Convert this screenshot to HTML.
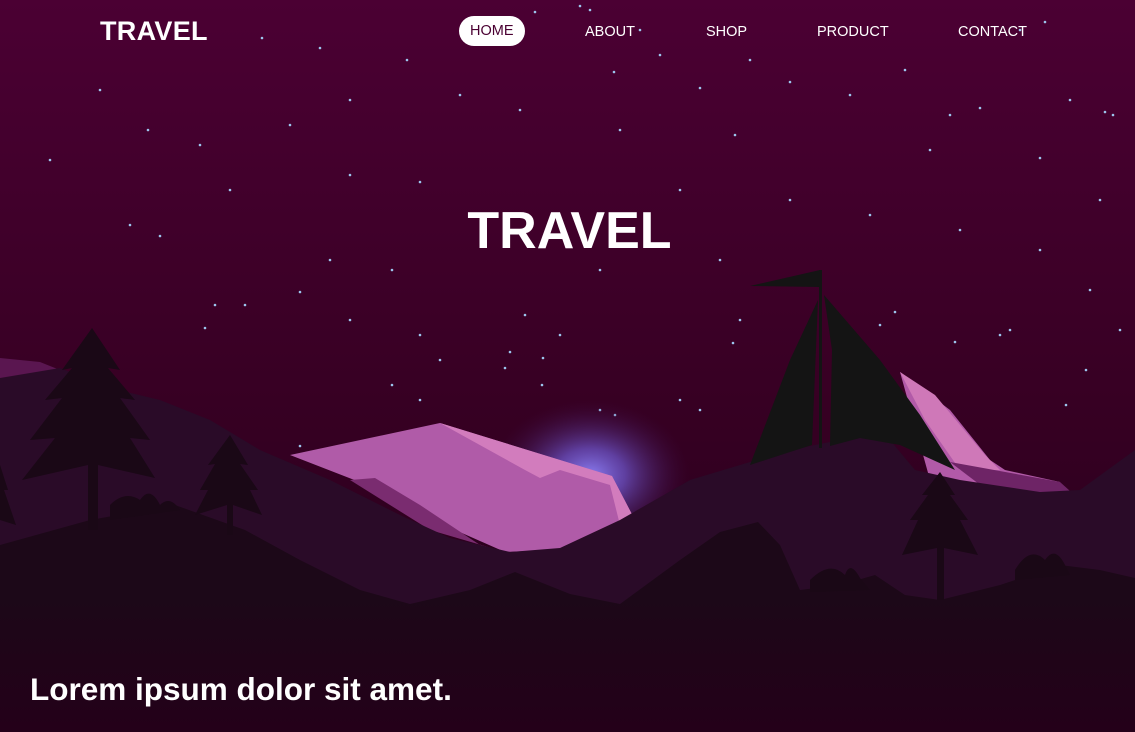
<!DOCTYPE html>
<html><head><meta charset="utf-8"><style>
html,body{margin:0;padding:0;width:1135px;height:732px;overflow:hidden;background:#3a0025;font-family:"Liberation Sans",sans-serif}
svg{position:absolute;left:0;top:0}
.logo{position:absolute;left:100px;top:16px;color:#fff;font-weight:bold;font-size:27px;letter-spacing:0.3px}
.nav a{position:absolute;top:23px;color:#fff;font-size:14.5px;text-decoration:none;line-height:18px}
.home{background:#fff;color:#4a0032!important;border-radius:16px;padding:6px 11px;top:16px!important}
.title{position:absolute;left:0;width:1135px;text-align:center;top:201px;color:#fff;font-weight:bold;font-size:52px;padding-left:2px}
.lorem{position:absolute;left:30px;top:671px;color:#fff;font-weight:bold;font-size:31.5px}
</style></head><body>
<svg width="1135" height="732" viewBox="0 0 1135 732">
<defs>
<linearGradient id="sky" x1="0" y1="0" x2="0" y2="1">
<stop offset="0" stop-color="#4b0033"/><stop offset="0.55" stop-color="#370023"/><stop offset="1" stop-color="#23001a"/>
</linearGradient>
<radialGradient id="glow" cx="0.5" cy="0.5" r="0.5">
<stop offset="0" stop-color="#8a7cf0"/><stop offset="0.35" stop-color="#6a4fc0" stop-opacity="0.8"/><stop offset="1" stop-color="#3a0a40" stop-opacity="0"/>
</radialGradient>
<linearGradient id="ground" x1="0" y1="0" x2="0" y2="1">
<stop offset="0" stop-color="#1c0818"/><stop offset="0.4" stop-color="#1c0818"/><stop offset="1" stop-color="#240019"/>
</linearGradient>
</defs>
<rect width="1135" height="732" fill="url(#sky)"/>
<g fill="#9cc6ee">
<circle cx="262" cy="38" r="1.3"/><circle cx="148" cy="130" r="1.3"/><circle cx="200" cy="145" r="1.3"/><circle cx="320" cy="48" r="1.3"/><circle cx="407" cy="60" r="1.3"/>
<circle cx="535" cy="12" r="1.3"/><circle cx="580" cy="6" r="1.3"/><circle cx="590" cy="10" r="1.3"/><circle cx="614" cy="72" r="1.3"/><circle cx="640" cy="30" r="1.3"/>
<circle cx="660" cy="55" r="1.3"/><circle cx="700" cy="88" r="1.3"/><circle cx="750" cy="60" r="1.3"/><circle cx="790" cy="82" r="1.3"/><circle cx="850" cy="95" r="1.3"/>
<circle cx="905" cy="70" r="1.3"/><circle cx="950" cy="115" r="1.3"/><circle cx="980" cy="108" r="1.3"/><circle cx="1020" cy="30" r="1.3"/><circle cx="1045" cy="22" r="1.3"/>
<circle cx="1070" cy="100" r="1.3"/><circle cx="1105" cy="112" r="1.3"/><circle cx="1113" cy="115" r="1.3"/><circle cx="1040" cy="158" r="1.3"/><circle cx="930" cy="150" r="1.3"/>
<circle cx="735" cy="135" r="1.3"/><circle cx="620" cy="130" r="1.3"/><circle cx="520" cy="110" r="1.3"/><circle cx="460" cy="95" r="1.3"/><circle cx="350" cy="100" r="1.3"/>
<circle cx="290" cy="125" r="1.3"/><circle cx="230" cy="190" r="1.3"/><circle cx="160" cy="236" r="1.3"/><circle cx="130" cy="225" r="1.3"/><circle cx="350" cy="175" r="1.3"/>
<circle cx="420" cy="182" r="1.3"/><circle cx="392" cy="270" r="1.3"/><circle cx="330" cy="260" r="1.3"/><circle cx="300" cy="292" r="1.3"/><circle cx="215" cy="305" r="1.3"/>
<circle cx="205" cy="328" r="1.3"/><circle cx="245" cy="305" r="1.3"/><circle cx="350" cy="320" r="1.3"/><circle cx="420" cy="335" r="1.3"/><circle cx="440" cy="360" r="1.3"/>
<circle cx="505" cy="368" r="1.3"/><circle cx="510" cy="352" r="1.3"/><circle cx="543" cy="358" r="1.3"/><circle cx="560" cy="335" r="1.3"/><circle cx="525" cy="315" r="1.3"/>
<circle cx="542" cy="385" r="1.3"/><circle cx="392" cy="385" r="1.3"/><circle cx="420" cy="400" r="1.3"/><circle cx="300" cy="446" r="1.3"/><circle cx="600" cy="410" r="1.3"/>
<circle cx="615" cy="415" r="1.3"/><circle cx="680" cy="400" r="1.3"/><circle cx="700" cy="410" r="1.3"/><circle cx="733" cy="343" r="1.3"/><circle cx="740" cy="320" r="1.3"/>
<circle cx="880" cy="325" r="1.3"/><circle cx="895" cy="312" r="1.3"/><circle cx="955" cy="342" r="1.3"/><circle cx="1000" cy="335" r="1.3"/><circle cx="1010" cy="330" r="1.3"/>
<circle cx="1066" cy="405" r="1.3"/><circle cx="1086" cy="370" r="1.3"/><circle cx="1120" cy="330" r="1.3"/><circle cx="1040" cy="250" r="1.3"/><circle cx="960" cy="230" r="1.3"/>
<circle cx="870" cy="215" r="1.3"/><circle cx="790" cy="200" r="1.3"/><circle cx="720" cy="260" r="1.3"/><circle cx="600" cy="270" r="1.3"/><circle cx="1100" cy="200" r="1.3"/>
<circle cx="470" cy="25" r="1.3"/><circle cx="100" cy="90" r="1.3"/><circle cx="50" cy="160" r="1.3"/><circle cx="680" cy="190" r="1.3"/><circle cx="1090" cy="290" r="1.3"/>
</g>
<ellipse cx="590" cy="475" rx="100" ry="75" fill="url(#glow)"/>
<path d="M0 358 L40 362 L80 378 L0 380 Z" fill="#5a1650"/>
<path d="M900 372 L950 410 L990 460 L1005 470 L1060 482 L1000 500 L930 480 Z" fill="#b25aa8"/>
<path d="M900 372 L935 395 L985 455 L1000 470 L960 470 L925 420 Z" fill="#cf78b8"/>
<path d="M950 462 L1060 482 L1080 500 L1000 500 Z" fill="#6e2466"/>
<path d="M290 455 L440 423 L612 476 L636 522 L560 550 L505 552 L455 530 L375 488 Z" fill="#b05ba8"/>
<path d="M440 423 L612 476 L636 522 L620 525 L610 485 L560 470 L540 478 L525 470 Z" fill="#d27cbd"/>
<path d="M350 480 L375 478 L420 505 L480 545 L505 552 L430 530 Z" fill="#7a2c70"/>
<path d="M0 378 L60 368 L110 388 L160 400 L210 420 L260 450 L330 480 L400 515 L450 538 L510 552 L560 548 L620 520 L690 480 L750 462 L800 448 L860 436 L890 440 L915 470 L960 480 L1040 492 L1080 490 L1135 450 L1135 732 L0 732 Z" fill="#2a0b28"/>
<g fill="#141414">
<path d="M750 286 L820 270 L820 287 Z"/>
<rect x="819" y="270" width="3" height="178"/>
<path d="M818 300 L790 360 L750 465 L790 452 L812 445 Z"/>
<path d="M824 295 L880 360 L920 415 L955 470 L900 445 L860 438 L830 446 L832 350 Z"/>
</g>
<path d="M0 545 L90 520 L175 505 L245 530 L300 560 L360 590 L410 604 L470 590 L515 572 L570 594 L620 604 L680 560 L720 532 L758 522 L780 545 L800 590 L840 585 L875 575 L905 595 L940 600 L1000 585 L1060 565 L1100 570 L1135 578 L1135 732 L0 732 Z" fill="url(#ground)"/>
<g fill="#1a0816">
<path d="M92 328 L120 370 L108 368 L135 400 L120 398 L150 440 L130 438 L155 478 L98 465 L98 530 L88 530 L88 465 L22 480 L55 438 L30 440 L62 398 L45 400 L72 368 L62 370 Z"/>
<path d="M230 435 L248 465 L240 464 L258 490 L250 490 L262 515 L233 505 L233 535 L227 535 L227 505 L195 515 L208 490 L200 490 L215 464 L208 465 Z"/>
<path d="M940 472 L955 495 L950 495 L968 520 L960 520 L978 555 L944 548 L944 600 L937 600 L937 548 L902 555 L918 520 L910 520 L928 495 L922 495 Z"/>
<path d="M0 465 L8 490 L4 490 L16 525 L0 520 Z"/>
<path d="M110 505 Q125 490 140 500 Q150 485 160 505 Q170 495 180 510 L110 520 Z"/>
<path d="M810 580 Q830 560 845 575 Q850 560 860 578 L870 590 L810 592 Z"/>
<path d="M1015 570 Q1030 545 1045 560 Q1055 545 1065 565 L1070 575 L1015 580 Z"/>
</g>
</svg>
<div class="logo">TRAVEL</div>
<div class="nav">
<a class="home" style="left:459px">HOME</a>
<a style="left:585px">ABOUT</a>
<a style="left:706px">SHOP</a>
<a style="left:817px">PRODUCT</a>
<a style="left:958px">CONTACT</a>
</div>
<div class="title">TRAVEL</div>
<div class="lorem">Lorem ipsum dolor sit amet.</div>
</body></html>
